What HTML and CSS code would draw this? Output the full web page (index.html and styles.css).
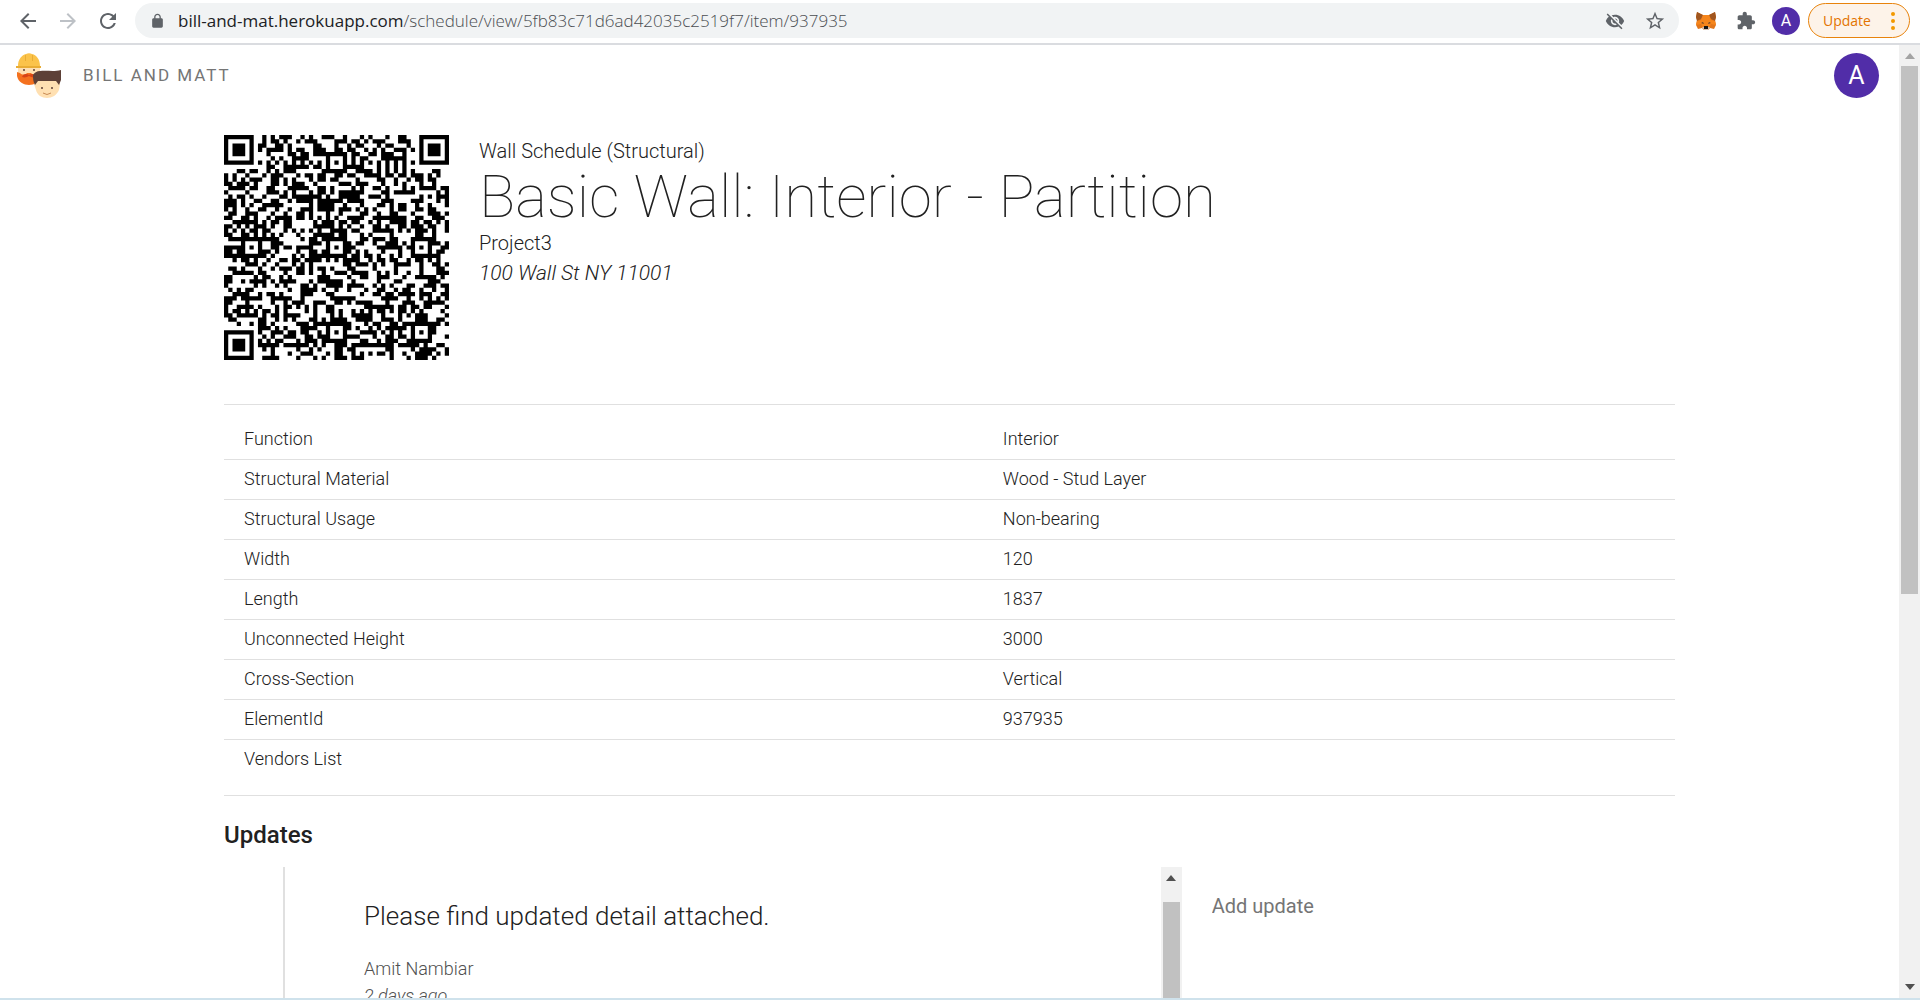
FILE: index.html
```html
<!DOCTYPE html>
<html lang="en">
<head>
<meta charset="utf-8">
<title>Bill and Matt</title>
<link rel="stylesheet" href="styles.css">
</head>
<body>
<div class="toolbar">
  <button class="tool" aria-label="Back"><svg class="icon" viewBox="0 0 24 24"><path d="M20 11H7.83l5.59-5.59L12 4l-8 8 8 8 1.41-1.41L7.83 13H20v-2z"/></svg></button>
  <button class="tool tool-off" aria-label="Forward"><svg class="icon" viewBox="0 0 24 24"><path d="M12 4l-1.41 1.41L16.17 11H4v2h12.17l-5.58 5.59L12 20l8-8z"/></svg></button>
  <button class="tool" aria-label="Reload"><svg class="icon" viewBox="0 0 24 24"><path d="M17.65 6.35C16.2 4.9 14.21 4 12 4c-4.42 0-7.99 3.58-7.99 8s3.57 8 7.99 8c3.73 0 6.84-2.55 7.73-6h-2.08c-.82 2.33-3.04 4-5.65 4-3.31 0-6-2.69-6-6s2.69-6 6-6c1.66 0 3.14.69 4.22 1.78L13 11h7V4l-2.35 2.35z"/></svg></button>
  <div class="omnibox">
    <svg class="lock" viewBox="0 0 24 24"><path d="M18 8h-1V6c0-2.76-2.24-5-5-5S7 3.240 7 6v2H6c-1.100 0-2 .9-2 2v10c0 1.100.9 2 2 2h12c1.100 0 2-.9 2-2V10c0-1.100-.9-2-2-2zM9 6c0-1.660 1.340-3 3-3s3 1.340 3 3v2H9V6z"/></svg>
    <div class="address"><span class="host">bill-and-mat.herokuapp.com</span>/schedule/view/5fb83c71d6ad42035c2519f7/item/937935</div>
    <button class="tool" aria-label="Third-party cookies blocked"><svg class="icon-sm" viewBox="0 0 24 24"><path d="M12 7c2.760 0 5 2.240 5 5 0 .65-.13 1.260-.36 1.830l2.920 2.920c1.510-1.260 2.700-2.890 3.430-4.750-1.730-4.390-6-7.500-11-7.500-1.400 0-2.740.25-3.980.7l2.160 2.160C10.740 7.130 11.350 7 12 7zM2 4.270l2.280 2.280.46.46C3.080 8.300 1.780 10.020 1 12c1.730 4.390 6 7.500 11 7.500 1.550 0 3.030-.3 4.380-.84l.42.42L19.730 22 21 20.730 3.270 3 2 4.270zM7.530 9.800l1.550 1.550c-.05.21-.08.43-.08.65 0 1.660 1.340 3 3 3 .22 0 .44-.03.65-.08l1.550 1.550c-.67.33-1.410.53-2.200.53-2.760 0-5-2.240-5-5 0-.79.2-1.530.53-2.200zm4.310-.78l3.150 3.150.02-.16c0-1.660-1.340-3-3-3l-.17.01z"/></svg></button>
    <button class="tool" aria-label="Bookmark this page"><svg class="icon-md" viewBox="0 0 24 24"><path d="M22 9.240l-7.190-.62L12 2 9.190 8.630 2 9.240l5.460 4.730L5.820 21 12 17.270 18.180 21l-1.630-7.030L22 9.240zM12 15.400l-3.760 2.270 1-4.280-3.320-2.880 4.380-.38L12 6.100l1.710 4.040 4.380.38-3.320 2.880 1 4.280L12 15.400z"/></svg></button>
  </div>
  <button class="tool" aria-label="MetaMask"><svg class="icon-sm" viewBox="0 0 20 20">
    <path fill="#e2761b" d="M1 1l6 3h6l6-3 1 5-1 3 1 5-2 4-4-1-2 2H8l-2-2-4 1-2-4 1-5-1-3z"/>
    <path fill="#a0561f" d="M1 1l6 3-2 4-4 2-1-4zM19 1l-6 3 2 4 4 2 1-4z"/>
    <path fill="#f6851b" d="M7 4h6l2 5 4 1 1 4-5-1-2 4H7l-2-4-5 1 1-4 4-1z"/>
    <path fill="#5f4130" d="M5 12l2-1 1 2zM15 12l-2-1-1 2z"/>
    <path fill="#d7c1b3" d="M6 16h8l-2 3H8z"/><path fill="#161616" d="M8 15h4v3H8z"/></svg></button>
  <button class="tool" aria-label="Extensions"><svg class="icon-sm" viewBox="0 0 24 24"><path d="M20.500 11H19V7c0-1.100-.9-2-2-2h-4V3.500C13 2.120 11.880 1 10.500 1S8 2.120 8 3.500V5H4c-1.100 0-1.990.9-1.990 2v3.800H3.500c1.490 0 2.700 1.210 2.700 2.700s-1.210 2.700-2.700 2.700H2V20c0 1.100.9 2 2 2h3.800v-1.500c0-1.490 1.210-2.700 2.700-2.700s2.700 1.210 2.700 2.700V22H17c1.100 0 2-.9 2-2v-4h1.500c1.380 0 2.500-1.120 2.500-2.500S21.880 11 20.500 11z"/></svg></button>
  <button class="tool" aria-label="Profile"><span class="avatar avatar-sm">A</span></button>
  <button class="update">Update<svg class="dots" viewBox="0 0 4 18"><circle cx="2" cy="2" r="2"/><circle cx="2" cy="9" r="2"/><circle cx="2" cy="16" r="2"/></svg></button>
</div>

<div class="viewport">
  <div class="page">
    <header class="appbar">
      <svg class="logo" viewBox="0 0 45 45" aria-hidden="true">
        <path fill="#ffe0b2" d="M2 13h22v9c0 5-5 9-11 9S2 27 2 22z"/>
        <path fill="#f4711f" d="M1 19l3 1c2 2 5 2 7 0h4c2 2 5 2 7 0l3-1v4c-1 6-7 9-12 9S2 29 1 23z"/>
        <path fill="#d84315" d="M6 24c2-4 5-3 7-2 2-1 5-2 7 2-3 1-5 0-7-1-2 1-4 2-7 1z"/>
        <circle cx="8" cy="17" r="1" fill="#5d4037"/><circle cx="18" cy="17" r="1" fill="#5d4037"/>
        <path fill="#fbc34a" d="M2 13C2 6 6 2 10 1c2-1 4-1 6 0 5 1 8 6 8 12z"/>
        <path fill="#e9ad35" d="M0 13h25v2H0zM9 2h1v6H9zM16 2h1v6h-1z"/>
        <path fill="#ffe0b2" d="M18 31l3-6h20l3 6-1 6c-2 5-7 8-12 8s-10-3-11-8z"/>
        <path fill="#5d4037" d="M17 22c1-2 4-4 7-4 7-1 13 1 21-1v10l-2 5-3-4H22l-3 4c-2-3-2-7-2-10z"/>
        <circle cx="26" cy="35" r="1" fill="#5d4037"/><circle cx="36" cy="35" r="1" fill="#5d4037"/>
        <path fill="none" stroke="#c98b55" d="M27 40q4 3 8 0"/>
      </svg>
      <a class="brand" href="#">BILL AND MATT</a>
      <button class="avatar avatar-lg" aria-label="Account">A</button>
    </header>
    <main class="content">
      <section class="summary">
        <svg class="qr" id="qr" viewBox="0 0 53 53" role="img" aria-label="QR code for this item"></svg>
        <div class="facts">
          <p>Wall Schedule (Structural)</p>
          <h1>Basic Wall: Interior - Partition</h1>
          <p>Project3</p>
          <p class="italic place">100 Wall St NY 11001</p>
        </div>
      </section>
      <div class="sheet">
        <table>
          <tbody>
            <tr><th scope="row">Function</th><td>Interior</td></tr>
            <tr><th scope="row">Structural Material</th><td>Wood - Stud Layer</td></tr>
            <tr><th scope="row">Structural Usage</th><td>Non-bearing</td></tr>
            <tr><th scope="row">Width</th><td>120</td></tr>
            <tr><th scope="row">Length</th><td>1837</td></tr>
            <tr><th scope="row">Unconnected Height</th><td>3000</td></tr>
            <tr><th scope="row">Cross-Section</th><td>Vertical</td></tr>
            <tr><th scope="row">ElementId</th><td>937935</td></tr>
            <tr><th scope="row">Vendors List</th><td></td></tr>
          </tbody>
        </table>
      </div>
      <h2>Updates</h2>
      <section class="updates">
        <div class="feed">
          <article class="entry">
            <p class="message">Please find updated detail attached.</p>
            <p class="meta">Amit Nambiar</p>
            <p class="meta italic">2 days ago</p>
          </article>
          <div class="scrollbar">
            <svg class="arrow" viewBox="0 0 10 6"><path d="M5 0l5 6H0z"/></svg>
            <div class="thumb feed-thumb"></div>
          </div>
        </div>
        <textarea class="compose" aria-label="Add update" placeholder="Add update"></textarea>
      </section>
    </main>
  </div>
  <div class="scrollbar">
    <svg class="arrow arrow-off" viewBox="0 0 10 6"><path d="M5 0l5 6H0z"/></svg>
    <div class="track"><div class="thumb page-thumb"></div></div>
    <svg class="arrow" viewBox="0 0 10 6"><path d="M0 0h10L5 6z"/></svg>
  </div>
</div>
<script src="qr.js"></script>
</body>
</html>
```
FILE: styles.css
```css
* { box-sizing: border-box; }
body {
  margin: 0;
  height: 100vh;
  display: flex;
  flex-direction: column;
  overflow: hidden;
  border-bottom: 2px solid #cfe2ec;
  background: #fff;
  color: #212121;
  font-family: Roboto, sans-serif;
}
p, h1, h2 { margin: 0; }
button { border: 0; padding: 0; background: none; font: inherit; }

.toolbar {
  flex: none;
  display: flex;
  align-items: center;
  height: 45px;
  padding: 0 10px 2px 8px;
  border-bottom: 2px solid #dadce0;
  color: #5f6368;
  font-family: "Open Sans", "Noto Sans", sans-serif;
}
.tool {
  flex: none;
  width: 40px;
  height: 35px;
  display: flex;
  align-items: center;
  justify-content: center;
  color: #5f6368;
}
.tool-off { color: #bdc1c6; }
.icon { width: 24px; height: 24px; fill: currentColor; }
.icon-md { width: 22px; height: 22px; fill: currentColor; }
.icon-sm { width: 20px; height: 20px; fill: currentColor; }
.omnibox {
  flex: 1;
  display: flex;
  align-items: center;
  height: 35px;
  margin: 0 7px;
  padding: 0 4px 0 14px;
  border-radius: 18px;
  background: #f1f3f4;
}
.lock { width: 17px; height: 16px; margin-right: 12px; fill: #5f6368; }
.address {
  flex: 1;
  color: #4a4d51;
  font-size: 17px;
  font-weight: 300;
  line-height: 24px;
  white-space: nowrap;
}
.host { color: #202124; font-weight: 400; }
.avatar {
  display: flex;
  align-items: center;
  justify-content: center;
  border-radius: 50%;
  background: #512da8;
  color: #fff;
  font-family: Roboto, sans-serif;
}
.avatar-sm { width: 28px; height: 28px; font-size: 16px; }
.avatar-lg { width: 45px; height: 45px; margin-left: auto; font-size: 25px; }
.update {
  display: flex;
  align-items: center;
  justify-content: space-between;
  width: 102px;
  height: 35px;
  margin-left: 2px;
  padding: 0 14px;
  border: 1px solid #e8830c;
  border-radius: 18px;
  background: #fdf3e9;
  color: #e37400;
  font-size: 14px;
}
.dots { width: 4px; height: 18px; fill: #f29900; }

.viewport { flex: 1; min-height: 0; display: flex; }
.page { flex: 1; min-width: 0; display: flex; flex-direction: column; overflow: hidden; }
.appbar {
  flex: none;
  display: flex;
  align-items: center;
  gap: 22px;
  height: 60px;
  padding: 0 20px 0 16px;
}
.logo { width: 45px; height: 45px; }
.brand {
  color: #757575;
  font-size: 17px;
  letter-spacing: 2px;
  text-decoration: none;
}
.content {
  flex: 1;
  min-height: 0;
  display: flex;
  flex-direction: column;
  padding: 30px 224px 0;
}
.summary { display: flex; gap: 30px; }
.qr { flex: none; width: 225px; height: 225px; }
.facts { padding-top: 1px; font-size: 20px; font-weight: 300; line-height: 30px; }
h1 { font-size: 60px; font-weight: 100; line-height: 62px; }
.italic { font-style: italic; }
.place { font-size: 21px; }
.sheet {
  margin-top: 44px;
  padding: 14px 0 16px;
  border-top: 1px solid #e0e0e0;
  border-bottom: 1px solid #e0e0e0;
}
table { width: 100%; border-collapse: collapse; font-size: 18px; line-height: 24px; }
th, td {
  height: 40px;
  padding: 0 20px;
  border-bottom: 1px solid #e0e0e0;
  font-weight: 350;
  text-align: left;
}
th { width: 52.300%; }
tr:last-child th, tr:last-child td { border-bottom: 0; }
h2 { margin: 25px 0 18px; font-size: 24px; font-weight: 500; line-height: 28px; }
.updates { flex: 1; min-height: 0; display: flex; gap: 30px; }
.feed {
  flex: 0 0 66%;
  display: flex;
  justify-content: space-between;
  overflow: hidden;
}
.entry { margin-left: 59px; padding: 33px 0 0 79px; border-left: 2px solid #e0e0e0; }
.message { margin-bottom: 23px; font-size: 26px; font-weight: 300; line-height: 32px; }
.meta { color: #505050; font-size: 18px; font-weight: 300; line-height: 27px; }
.compose {
  flex: 1;
  margin: 24px 0 0;
  padding: 0;
  border: 0;
  outline: 0;
  resize: none;
  background: none;
  font: 400 20px/30px Roboto, sans-serif;
}
.compose::placeholder { color: #757575; }

.scrollbar {
  flex: none;
  width: 21px;
  padding: 8px 2px;
  display: flex;
  flex-direction: column;
  align-items: center;
  background: #f1f1f1;
}
.arrow { width: 10px; height: 6px; fill: #505050; }
.arrow-off { fill: #a3a3a3; }
.track { flex: 1; width: 100%; padding: 7px 0; }
.thumb { width: 100%; background: #c1c1c1; }
.page-thumb { height: 58%; }
.feed .scrollbar { padding-bottom: 0; }
.feed-thumb { flex: 1; margin-top: 21px; }
```
FILE: qr.js
```js
// Draws the item link as a QR code: version 9, error correction H, byte mode.
(function () {
  var text = 'https://bill-and-mat.herokuapp.com/schedule/view/5fb83c71d6ad42035c2519f7/item/937935';
  var SIZE = 53, DATA = 100, ECC = 24, BLOCKS = [12, 12, 12, 12, 13, 13, 13, 13], MASK = 6;

  var bits = [];
  function push(v, n) { for (var i = n - 1; i >= 0; i--) bits.push((v >>> i) & 1); }
  push(4, 4);
  push(text.length, 8);
  for (var i = 0; i < text.length; i++) push(text.charCodeAt(i), 8);
  push(0, 4);
  while (bits.length % 8) bits.push(0);
  for (var pad = 0xec; bits.length < DATA * 8; pad ^= 0xec ^ 0x11) push(pad, 8);
  var data = [];
  for (i = 0; i < DATA; i++) data.push(parseInt(bits.slice(i * 8, i * 8 + 8).join(''), 2));

  function mul(a, b) {
    var r = 0;
    for (var k = 7; k >= 0; k--) { r = (r << 1) ^ ((r >>> 7) * 0x11d); if ((b >>> k) & 1) r ^= a; }
    return r;
  }
  var gen = [], root = 1;
  for (i = 0; i < ECC; i++) gen.push(0);
  gen[ECC - 1] = 1;
  for (i = 0; i < ECC; i++) {
    for (var j = 0; j < ECC; j++) { gen[j] = mul(gen[j], root); if (j + 1 < ECC) gen[j] ^= gen[j + 1]; }
    root = mul(root, 2);
  }
  var at = 0;
  var blocks = BLOCKS.map(function (n) { var d = data.slice(at, at + n); at += n; return d; });
  var checks = blocks.map(function (d) {
    var rem = gen.map(function () { return 0; });
    d.forEach(function (b) {
      var f = b ^ rem.shift();
      rem.push(0);
      gen.forEach(function (g, k) { rem[k] ^= mul(g, f); });
    });
    return rem;
  });
  var stream = [];
  for (i = 0; i < 13; i++) blocks.forEach(function (d) { if (i < d.length) stream.push(d[i]); });
  for (i = 0; i < ECC; i++) checks.forEach(function (c) { stream.push(c[i]); });

  var grid = [], fixed = [];
  for (i = 0; i < SIZE; i++) { grid.push(new Array(SIZE).fill(0)); fixed.push(new Array(SIZE).fill(false)); }
  function set(x, y, v) {
    if (x < 0 || y < 0 || x >= SIZE || y >= SIZE) return;
    grid[y][x] = v ? 1 : 0;
    fixed[y][x] = true;
  }
  function rings(cx, cy, r, light) {
    for (var y = -r; y <= r; y++) for (var x = -r; x <= r; x++) {
      set(cx + x, cy + y, light.indexOf(Math.max(Math.abs(x), Math.abs(y))) < 0);
    }
  }
  for (i = 0; i < SIZE; i++) { set(6, i, i % 2 === 0); set(i, 6, i % 2 === 0); }
  rings(3, 3, 4, [2, 4]);
  rings(SIZE - 4, 3, 4, [2, 4]);
  rings(3, SIZE - 4, 4, [2, 4]);
  [[6, 26], [26, 6], [26, 26], [26, 46], [46, 26], [46, 46]].forEach(function (p) { rings(p[0], p[1], 2, [1]); });

  var format = 0x0d0c;
  function f(k) { return (format >>> k) & 1; }
  for (i = 0; i <= 5; i++) set(8, i, f(i));
  set(8, 7, f(6)); set(8, 8, f(7)); set(7, 8, f(8));
  for (i = 9; i < 15; i++) set(14 - i, 8, f(i));
  for (i = 0; i < 8; i++) set(SIZE - 1 - i, 8, f(i));
  for (i = 8; i < 15; i++) set(8, SIZE - 15 + i, f(i));
  set(8, SIZE - 8, 1);
  var version = 0x09a99;
  for (i = 0; i < 18; i++) {
    var a = SIZE - 11 + i % 3, b = Math.floor(i / 3);
    set(a, b, (version >>> i) & 1);
    set(b, a, (version >>> i) & 1);
  }

  var n = 0;
  for (var right = SIZE - 1; right >= 1; right -= 2) {
    if (right === 6) right = 5;
    for (var v = 0; v < SIZE; v++) for (j = 0; j < 2; j++) {
      var x = right - j, y = ((right + 1) & 2) === 0 ? SIZE - 1 - v : v;
      if (fixed[y][x]) continue;
      var bit = n < stream.length * 8 ? (stream[n >>> 3] >>> (7 - (n & 7))) & 1 : 0;
      n++;
      if (MASK === 6 && ((x * y) % 2 + (x * y) % 3) % 2 === 0) bit ^= 1;
      grid[y][x] = bit;
    }
  }

  var d = '';
  grid.forEach(function (row, y) {
    for (var x = 0; x < SIZE; x++) {
      if (!row[x]) continue;
      var end = x;
      while (row[end]) end++;
      d += 'M' + x + ' ' + y + 'h' + (end - x) + 'v1h' + (x - end) + 'z';
      x = end;
    }
  });
  var path = document.createElementNS('http://www.w3.org/2000/svg', 'path');
  path.setAttribute('d', d);
  document.getElementById('qr').appendChild(path);
})();
```
